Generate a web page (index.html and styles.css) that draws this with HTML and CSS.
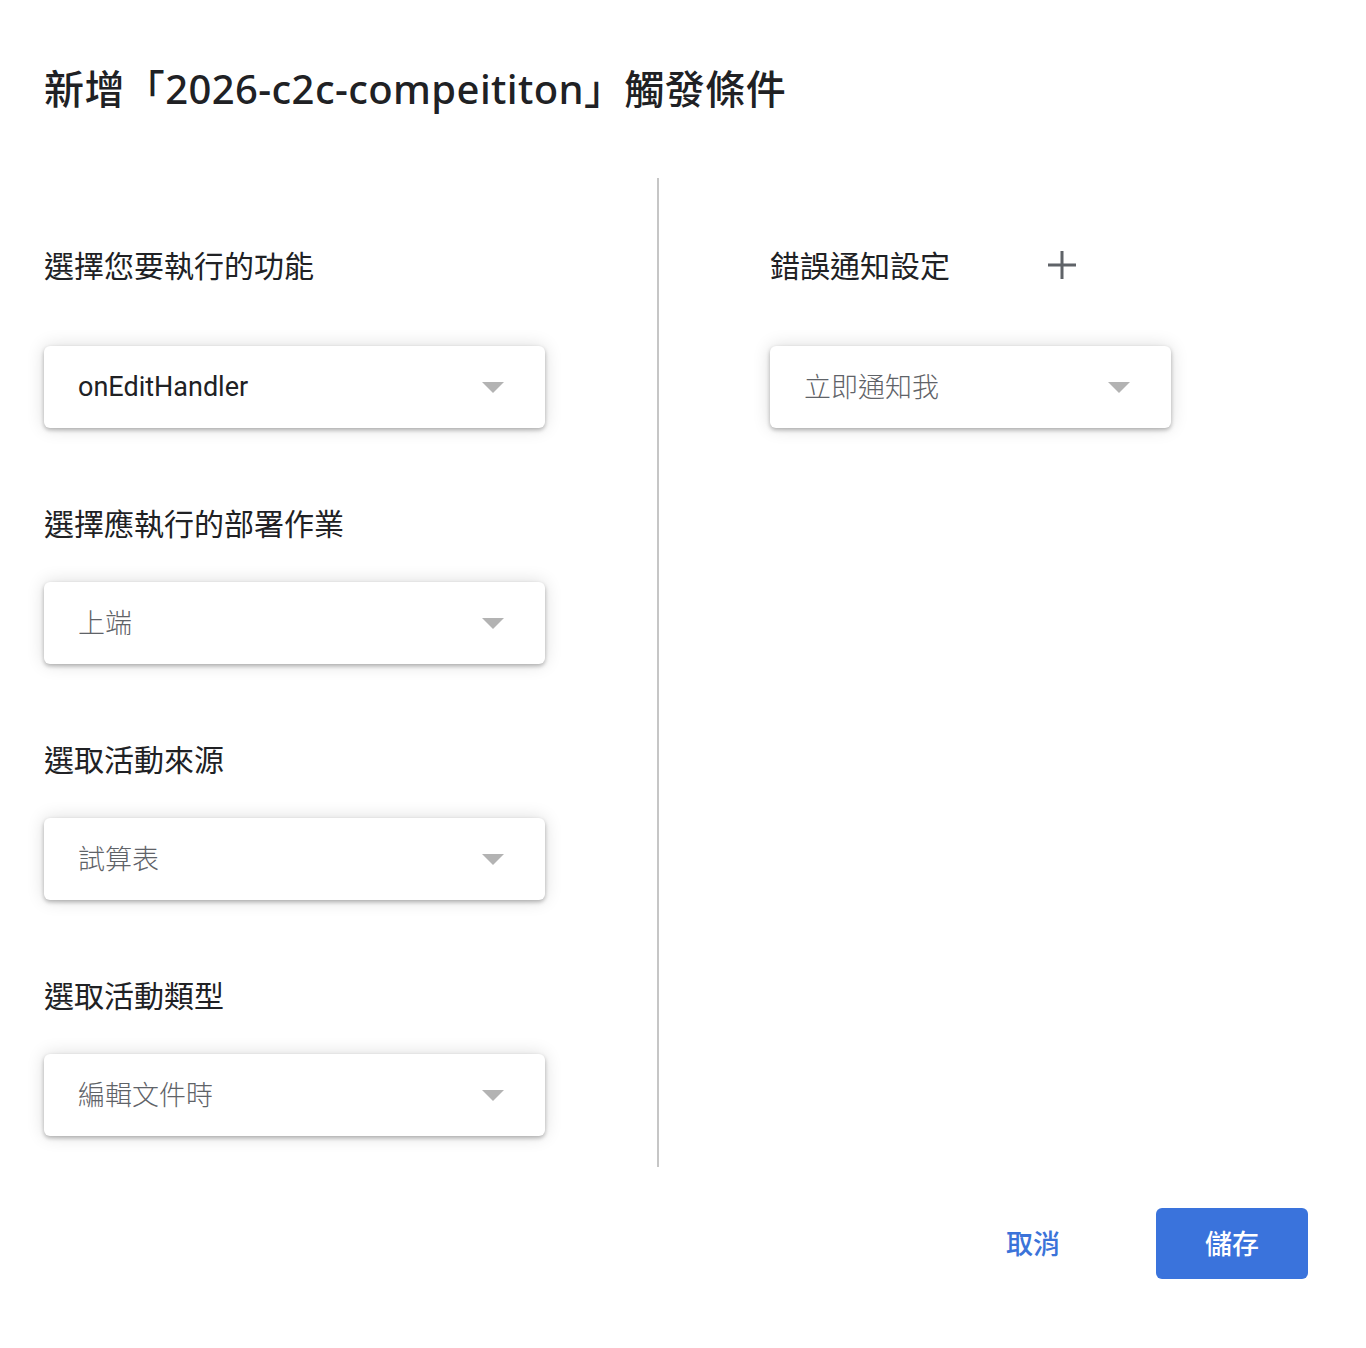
FILE: index.html
```html
<!DOCTYPE html>
<html lang="zh-Hant">
<head>
<meta charset="utf-8">
<title>新增觸發條件</title>
<link rel="stylesheet" href="styles.css">
</head>
<body>
<div class="dialog">
  <h1 class="title">新增「2026-c2c-compeititon」觸發條件</h1>
  <div class="body">
    <div class="col col-left">
      <div class="label first">選擇您要執行的功能</div>
      <div class="select"><span class="value">onEditHandler</span><span class="caret"></span></div>
      <div class="label">選擇應執行的部署作業</div>
      <div class="select"><span class="value muted">上端</span><span class="caret"></span></div>
      <div class="label">選取活動來源</div>
      <div class="select"><span class="value muted">試算表</span><span class="caret"></span></div>
      <div class="label">選取活動類型</div>
      <div class="select"><span class="value muted">編輯文件時</span><span class="caret"></span></div>
    </div>
    <div class="divider"></div>
    <div class="col col-right">
      <div class="label first label-row">
        <span>錯誤通知設定</span>
        <svg class="plus" width="30" height="30" viewBox="0 0 30 30"><path d="M15 1v28M1 15h28" stroke="#5f6368" stroke-width="3" fill="none"/></svg>
      </div>
      <div class="select select-narrow"><span class="value muted">立即通知我</span><span class="caret"></span></div>
    </div>
  </div>
  <div class="footer">
    <button class="btn btn-text">取消</button>
    <button class="btn btn-primary">儲存</button>
  </div>
</div>
</body>
</html>
```
FILE: styles.css
```css
* { box-sizing: border-box; }
html, body { margin: 0; padding: 0; background: #fff; }
body {
  font-family: "Noto Sans CJK TC", "Noto Sans", sans-serif;
  color: #202124;
}
.dialog {
  width: 1366px;
  height: 1348px;
  padding: 65px 58px 0 44px;
}
.title {
  margin: 0;
  font-family: "Noto Sans", "Noto Sans CJK TC", sans-serif;
  font-size: 40px;
  line-height: 48px;
  font-weight: 500;
  letter-spacing: 0.4px;
  color: #202124;
}
.body {
  display: flex;
  margin-top: 65px;
  height: 989px;
}
.col { display: flex; flex-direction: column; }
.col-left { width: 501px; }
.divider {
  width: 2px;
  background: #c6c6c6;
  margin-left: 112px;
  margin-right: 111px;
}
.col-right { width: 401px; }
.label {
  font-size: 30px;
  line-height: 40px;
  height: 40px;
  margin-top: 74px;
  margin-bottom: 40px;
  color: #202124;
  font-weight: 400;
}
.label.first { margin-top: 66px; margin-bottom: 62px; }
.label-row { display: flex; align-items: center; }
.plus { margin-left: 97px; margin-top: 2px; }
.select {
  height: 82px;
  background: #fff;
  border-radius: 6px;
  box-shadow: 0 2px 4px rgba(0,0,0,0.28), 0 0 18px rgba(0,0,0,0.14);
  display: flex;
  align-items: center;
  justify-content: space-between;
  padding: 0 41px 0 34px;
  flex-shrink: 0;
}
.value {
  font-family: Roboto, "Noto Sans CJK TC", sans-serif;
  font-size: 27px;
  color: #202124;
}
.value.muted {
  font-family: "Noto Sans CJK TC", sans-serif;
  font-weight: 300;
  color: #5f6368;
  padding-bottom: 4px;
}
.caret {
  width: 0;
  height: 0;
  border-left: 11px solid transparent;
  border-right: 11px solid transparent;
  border-top: 11px solid #b3b3b3;
}
.footer {
  display: flex;
  justify-content: flex-end;
  align-items: center;
  margin-top: 41px;
  gap: 96px;
}
.btn {
  font-family: "Noto Sans CJK TC", sans-serif;
  font-size: 27px;
  font-weight: 500;
  border: none;
  cursor: pointer;
}
.btn-text {
  background: transparent;
  color: #3b73d9;
  padding: 0 0 3px;
}
.btn-primary {
  width: 152px;
  height: 71px;
  background: #3a73dc;
  color: #fff;
  border-radius: 6px;
  padding: 0 0 3px;
}
```
